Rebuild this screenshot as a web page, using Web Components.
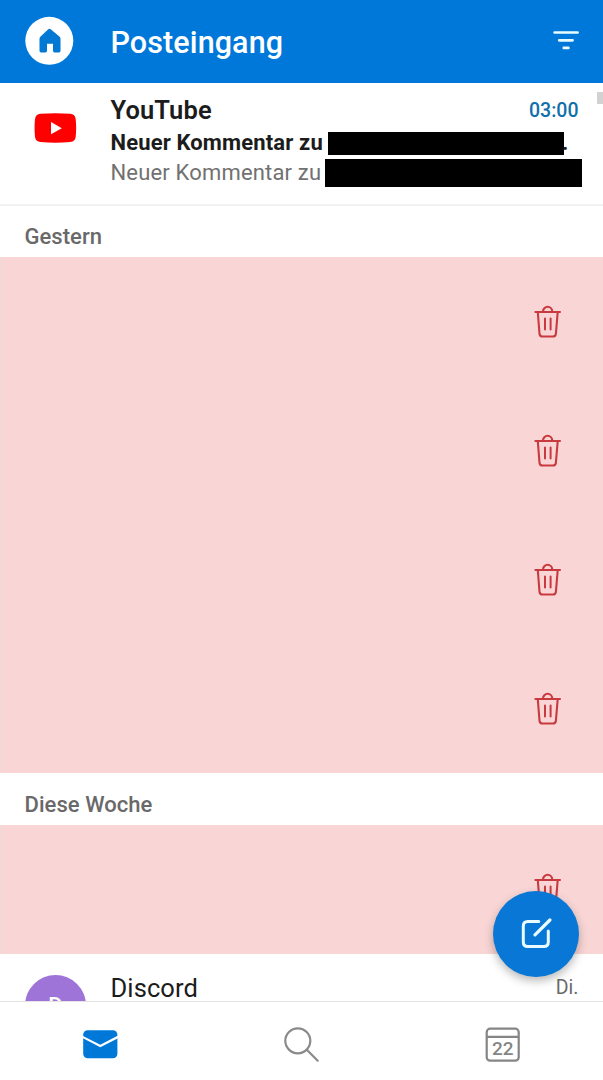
<!DOCTYPE html>
<html lang="de">
<head>
<meta charset="utf-8">
<title>Posteingang</title>
<style>
    html, body{
        margin:0;
        height:100%;
        overflow:hidden;
        background:#fff;
        font-family:Roboto, 'Liberation Sans', sans-serif;
    }
</style>
</head>
<body>
<mail-app>
    <app-header slot="header">Posteingang</app-header>
    <mail-row unread>
        <youtube-logo slot="avatar"></youtube-logo>
        <span slot="sender">YouTube</span>
        <span slot="time">03:00</span>
        <span slot="subject">Neuer Kommentar zu</span>
        <span slot="preview">Neuer Kommentar zu</span>
    </mail-row>
    <section-title>Gestern</section-title>
    <deleted-row></deleted-row>
    <deleted-row></deleted-row>
    <deleted-row></deleted-row>
    <deleted-row></deleted-row>
    <section-title>Diese Woche</section-title>
    <deleted-row></deleted-row>
    <mail-row>
        <letter-avatar slot="avatar">D</letter-avatar>
        <span slot="sender">Discord</span>
        <span slot="time">Di.</span>
    </mail-row>
    <compose-button slot="fab"></compose-button>
    <tab-bar slot="tabs"></tab-bar>
</mail-app>

<script>
// every element gets its own open shadow root
class BaseElement extends HTMLElement{
    constructor(){
        super();
        const template = document.createElement('template');
        template.innerHTML = this.constructor.html;
        this.attachShadow({mode:'open'});
        this.shadowRoot.appendChild(template.content.cloneNode(true));
    }
}

// PAGE
class MailApp extends BaseElement{
    static html = `
    <style>
        :host{
            display:flex;
            flex-direction:column;
            position:relative;
            height:1080px;
            overflow:hidden;
        }
        main{
            flex:1;
            min-height:0;
            overflow:hidden;
        }
        .fab{
            position:absolute;
            right:24.5px;
            bottom:103px;
        }
        .scroll-thumb{
            position:absolute;
            right:0;
            top:92px;
            width:6px;
            height:12px;
            background:#d2d2d2;
        }
    </style>
    <slot name="header"></slot>
    <main><slot></slot></main>
    <slot name="tabs"></slot>
    <div class="scroll-thumb"></div>
    <div class="fab"><slot name="fab"></slot></div>
    `;
}

// TOP BAR
class AppHeader extends BaseElement{
    static html = `
    <style>
        :host{
            display:flex;
            align-items:center;
            box-sizing:border-box;
            height:83px;
            padding:0 23px 0 25px;
            background:#0078d9;
            color:#fff;
        }
        .home{
            width:49px;
            height:49px;
            margin-bottom:2px;
        }
        h1{
            flex:1;
            margin:2px 0 0 36.5px;
            font-size:30.5px;
            line-height:36px;
            font-weight:500;
            letter-spacing:.1px;
        }
        .filter{
            margin-bottom:3px;
        }
    </style>
    <svg class="home" viewBox="0 0 49 49">
        <circle cx="24.3" cy="24.8" r="24" fill="#fff"/>
        <path fill="#0078d4" d="M23 13.400q1.500-1.200 3 0l8.400 7q1.100 1 1.100 2.400v12q0 1.600-1.600 1.600h-4.300q-1.600 0-1.600-1.600v-7h-6v7q0 1.600-1.600 1.600h-4.300q-1.600 0-1.600-1.600v-12q0-1.400 1.100-2.400z"/>
    </svg>
    <h1><slot></slot></h1>
    <svg class="filter" width="28" height="22" viewBox="0 0 28 22" stroke="#e8fbff" stroke-width="2.700" stroke-linecap="round">
        <path d="M2.600 3.500h23M7.200 11.300h13.400M11.800 18.900h4.600"/>
    </svg>
    `;
}

// MAIL
class MailRow extends BaseElement{
    static html = `
    <style>
        :host{
            display:flex;
            box-sizing:border-box;
            height:123px;
            padding:9px 21px 0 25px;
            border-bottom:2px solid #f2f2f2;
            color:#1c1c1c;
        }
        .avatar{
            flex:none;
            display:flex;
            width:61px;
            margin:12px 24.500px 0 0;
        }
        .body{
            flex:1;
            min-width:0;
        }
        .top{
            display:flex;
            justify-content:space-between;
            align-items:center;
            height:49px;
            padding-right:3.500px;
        }
        .sender{
            font-size:25.500px;
            letter-spacing:.1px;
        }
        .time{
            font-size:19.500px;
            color:#6a6a6a;
        }
        .line{
            display:none;
            white-space:nowrap;
        }
        :host([unread]) .line{
            display:flex;
            align-items:center;
        }
        :host([unread]) .sender{
            font-weight:600;
        }
        :host([unread]) .time{
            font-weight:500;
            color:#1170ac;
        }
        :host([unread]) .avatar{
            margin-top:6px;
        }
        :host([unread]) .top{
            height:36px;
        }
        .subject{
            height:29px;
            font-size:22px;
            font-weight:700;
            letter-spacing:.14px;
        }
        .preview{
            height:31px;
            font-size:22px;
            letter-spacing:.17px;
            color:#717171;
        }
        .label{
            flex:none;
        }
        .subject .label{ width:217px; }
        .preview .label{ width:214.500px; }
        .bar{
            flex:none;
            background:#000;
        }
        .subject .bar{
            width:236.500px;
            height:23px;
            margin-top:1px;
        }
        .subject .dot{ margin-left:-2px; }
        .preview .bar{
            width:257px;
            height:28px;
        }
    </style>
    <div class="avatar"><slot name="avatar"></slot></div>
    <div class="body">
        <div class="top">
            <div class="sender"><slot name="sender"></slot></div>
            <div class="time"><slot name="time"></slot></div>
        </div>
        <div class="line subject">
            <div class="label"><slot name="subject"></slot></div>
            <div class="bar"></div>
            <span class="dot">.</span>
        </div>
        <div class="line preview">
            <div class="label"><slot name="preview"></slot></div>
            <div class="bar"></div>
        </div>
    </div>
    `;
}

class YoutubeLogo extends BaseElement{
    static html = `
    <style>
        :host{
            display:block;
            margin:15px 0 0 9px;
        }
        svg{ display:block; }
    </style>
    <svg width="43" height="31" viewBox="0 0 43 31">
        <path fill="#f00" d="M6.500 .8Q21.300-.4 36.200 .8Q41.200 1.300 41.700 6.200Q42.600 15 41.700 23.800Q41.200 28.600 36.200 29.100Q21.300 30.300 6.500 29.100Q1.500 28.600 1 23.800Q.1 15 1 6.200Q1.500 1.300 6.500 .8z"/>
        <path fill="#fff" d="M17 9v12.300l10.800-6.100z"/>
    </svg>
    `;
}

class LetterAvatar extends BaseElement{
    static html = `
    <style>
        :host{
            display:flex;
            justify-content:center;
            align-items:center;
            width:61px;
            height:61px;
            border-radius:50%;
            background:#9f74d8;
            color:#fff;
            font-size:22px;
            font-weight:500;
        }
    </style>
    <slot></slot>
    `;
}

// GROUP HEADING
class SectionTitle extends BaseElement{
    static html = `
    <style>
        :host{
            display:flex;
            align-items:center;
            box-sizing:border-box;
            height:52px;
            padding:10px 24.500px 0;
            font-size:22px;
            font-weight:500;
            letter-spacing:.05px;
            color:#696969;
        }
        :host(:first-of-type){
            height:51px;
        }
    </style>
    <slot></slot>
    `;
}

// SWIPED ROW
class DeletedRow extends BaseElement{
    static html = `
    <style>
        :host{
            display:flex;
            justify-content:flex-end;
            align-items:center;
            box-sizing:border-box;
            height:129px;
            padding-right:41px;
            border-left:1px solid #eed9d6;
            background:#f9d6d5;
        }
    </style>
    <svg width="28" height="34" viewBox="0 0 28 34" fill="none" stroke="#c93a40" stroke-width="2.100" stroke-linecap="round" stroke-linejoin="round">
        <path d="M1.400 7h24.600M9 6.500a4.600 4.700 0 0 1 9.200 0"/>
        <path d="M3.800 7l1.700 21.800Q5.800 31.500 8.600 31.500h10.200q2.800 0 3.100-2.700L23.700 7"/>
        <path d="M11 13.500v11M16.600 13.500v11" stroke-width="2"/>
    </svg>
    `;
}

class ComposeButton extends BaseElement{
    static html = `
    <style>
        :host{
            display:flex;
            justify-content:center;
            align-items:center;
            width:86px;
            height:86px;
            border-radius:50%;
            background:#0877d6;
            box-shadow:0 4px 10px rgb(0 0 0 / 28%);
        }
    </style>
    <svg width="32" height="32" viewBox="0 0 32 32" fill="none" stroke="#eafcff" stroke-width="3" stroke-linecap="round" stroke-linejoin="round">
        <path d="M18.800 3.500H7.800q-4.500 0-4.500 4.500v16q0 4.500 4.500 4.500h16q4.500 0 4.500-4.500V13"/>
        <path d="M15 16.800L29.900 2" stroke-width="3.200"/>
    </svg>
    `;
}

// BOTTOM NAVIGATION
class TabBar extends BaseElement{
    static html = `
    <style>
        :host{
            display:grid;
            grid-template-columns:repeat(3, 1fr);
            place-items:center;
            box-sizing:border-box;
            height:79px;
            padding-top:7px;
            border-top:1px solid #e4e4e4;
            background:#fff;
        }
        svg{ display:block; }
        text{
            font-size:19px;
            font-weight:500;
        }
    </style>
    <svg width="36" height="36" viewBox="0 0 36 36">
        <rect x=".2" y="3.300" width="34.200" height="28" rx="4.500" fill="#0078d7"/>
        <path d="M-1 9.600l18.300 9.400 18.300-9.400" fill="none" stroke="#fff" stroke-width="2.200"/>
    </svg>
    <svg width="36" height="36" viewBox="0 0 36 36" fill="none" stroke="#8a8a8a" stroke-width="2.200" stroke-linecap="round">
        <circle cx="13.800" cy="13.800" r="12.500"/>
        <path d="M22.800 22.800l10.900 10.900"/>
    </svg>
    <svg width="36" height="36" viewBox="0 0 36 36" fill="none" stroke="#858585" stroke-width="2.200">
        <rect x="1.700" y="1.700" width="32" height="32" rx="3.500"/>
        <path d="M1.700 9.800h32"/>
        <text x="17.700" y="28.200" text-anchor="middle" fill="#858585" stroke="none">22</text>
    </svg>
    `;
}

window.customElements.define('mail-app', MailApp);
window.customElements.define('app-header', AppHeader);
window.customElements.define('mail-row', MailRow);
window.customElements.define('youtube-logo', YoutubeLogo);
window.customElements.define('letter-avatar', LetterAvatar);
window.customElements.define('section-title', SectionTitle);
window.customElements.define('deleted-row', DeletedRow);
window.customElements.define('compose-button', ComposeButton);
window.customElements.define('tab-bar', TabBar);
</script>
</body>
</html>
